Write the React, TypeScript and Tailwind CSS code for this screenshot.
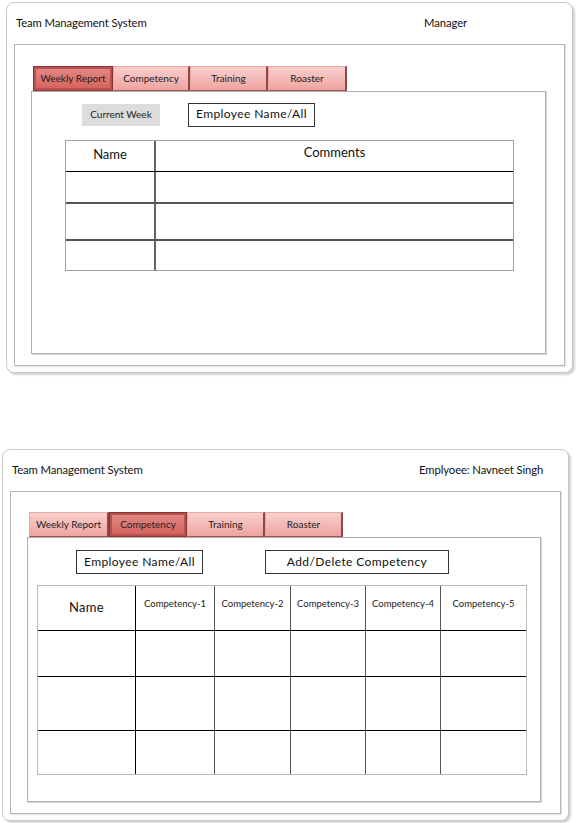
import React from 'react';

const tabs = ['Weekly Report', 'Competency', 'Training', 'Roaster'];

function Tab({ label, active, width }: { label: string; active: boolean; width: number }) {
  return (
    <div
      style={{ width }}
      className={
        active
          ? 'flex h-[25px] items-center justify-center border border-[#8a3634] bg-gradient-to-b from-[#e38a86] to-[#d4605c] shadow-[inset_0_0_0_2px_#b8504d] text-[10px] text-[#222]'
          : 'flex h-[25px] items-center justify-center border border-t-[#e7a9a6] border-l-[#e7a9a6] border-r-[2px] border-r-[#8f4644] border-b-[#9d5250] bg-gradient-to-b from-[#f9cfcd] to-[#eda3a0] text-[10px] text-[#222]'
      }
    >
      {label}
    </div>
  );
}

function Tabs({ active, widths }: { active: number; widths: number[] }) {
  return (
    <div className="flex">
      {tabs.map((t, i) => (
        <Tab key={t} label={t} active={i === active} width={widths[i]} />
      ))}
    </div>
  );
}

function Shell({ title, role, children, roleClass }: { title: string; role: string; children: React.ReactNode; roleClass: string }) {
  return (
    <div className="flex h-full flex-col rounded-[8px] border border-[#c9c9c9] bg-white shadow-[2px_2px_2px_rgba(0,0,0,0.18)]">
      <div className="relative h-[41px] text-[11.3px] tracking-[-0.1px] text-[#111]">
        <span className="absolute left-[9px] top-[12px]">{title}</span>
        <span className={`absolute top-[12px] ${roleClass}`}>{role}</span>
      </div>
      <div className="mx-[7px] mb-[6px] flex flex-1 flex-col border border-[#b5b5b5] shadow-[1px_1px_1px_rgba(0,0,0,0.1)]">
        {children}
      </div>
    </div>
  );
}

function WeeklyPanel() {
  return (
    <div className="ml-[6px] mt-[2px] h-[371px] w-[567px]">
      <Shell title="Team Management System" role="Manager" roleClass="left-[417px]">
        <div className="ml-[18px] mt-[21px]">
          <Tabs active={0} widths={[80, 77, 78, 79]} />
        </div>
        <div className="mb-[11px] ml-[16px] mr-[18px] flex-1 border border-[#b0b0b0] shadow-[1px_1px_1px_rgba(0,0,0,0.15)]">
          <div className="ml-[50px] mt-[11px] flex items-center gap-[28px]">
            <div className="flex h-[22px] w-[78px] items-center justify-center bg-[#dcdcdc] pb-[2px] text-[10px] text-[#222]">
              Current Week
            </div>
            <div className="flex h-[24px] w-[127px] items-center justify-center border border-[#333] pb-[2px] text-[12px] tracking-[0.4px] text-[#111]">
              Employee Name/All
            </div>
          </div>
          <div className="ml-[33px] mt-[13px] w-[449px] border border-[#a0a0a0]">
            <div className="flex h-[31px] border-b border-black">
              <div className="flex w-[90px] items-center justify-center border-r-2 border-[#666] pb-[3px] text-[13px] text-[#111]">
                Name
              </div>
              <div className="flex flex-1 items-start justify-center pt-[2px] text-[13px] text-[#111]">Comments</div>
            </div>
            {[32, 37, 29].map((h, i) => (
              <div
                key={i}
                style={{ height: h }}
                className={i < 2 ? 'flex border-b-2 border-[#555]' : 'flex'}
              >
                <div className="w-[90px] border-r-2 border-[#666]" />
                <div className="flex-1" />
              </div>
            ))}
          </div>
        </div>
      </Shell>
    </div>
  );
}

const comps = ['Competency-1', 'Competency-2', 'Competency-3', 'Competency-4', 'Competency-5'];
const compW = [79, 76, 75, 75];

function CompetencyPanel() {
  return (
    <div className="ml-[2px] mt-[76px] h-[372px] w-[567px]">
      <Shell title="Team Management System" role="Emplyoee: Navneet Singh" roleClass="left-[416px]">
        <div className="ml-[18px] mt-[20px]">
          <Tabs active={1} widths={[80, 78, 78, 78]} />
        </div>
        <div className="mb-[11px] ml-[16px] mr-[19px] flex-1 border border-[#b0b0b0] shadow-[1px_1px_1px_rgba(0,0,0,0.15)]">
          <div className="ml-[48px] mt-[12px] flex items-center gap-[62px]">
            <div className="flex h-[24px] w-[127px] items-center justify-center border border-[#333] pb-[1px] text-[12px] tracking-[0.4px] text-[#111]">
              Employee Name/All
            </div>
            <div className="flex h-[24px] w-[184px] items-center justify-center border border-[#333] pb-[1px] text-[12px] tracking-[0.4px] text-[#111]">
              Add/Delete Competency
            </div>
          </div>
          <div className="ml-[9px] mt-[11px] w-[490px] border border-[#b8b8b8]">
            <div className="flex h-[45px] border-b border-black">
              <div className="flex w-[98px] items-center justify-center border-r border-black text-[13px] tracking-[0.3px] text-[#111]">
                Name
              </div>
              {comps.map((c, i) => (
                <div
                  key={c}
                  style={i < 4 ? { width: compW[i] } : undefined}
                  className={
                    i < 4
                      ? 'flex items-start justify-center border-r border-[#555] pt-[11px] text-[9.5px] text-[#222]'
                      : 'flex flex-1 items-start justify-center pt-[11px] text-[9.5px] text-[#222]'
                  }
                >
                  {c}
                </div>
              ))}
            </div>
            {[46, 54, 43].map((h, r) => (
              <div key={r} style={{ height: h }} className={r < 2 ? 'flex border-b border-black' : 'flex'}>
                <div className="w-[98px] border-r border-black" />
                {compW.map((w, i) => (
                  <div key={i} style={{ width: w }} className="border-r border-[#555]" />
                ))}
                <div className="flex-1" />
              </div>
            ))}
          </div>
        </div>
      </Shell>
    </div>
  );
}

export default function App() {
  return (
    <div className="h-[823px] w-[576px] bg-white font-['Lato','Open_Sans',sans-serif]">
      <WeeklyPanel />
      <CompetencyPanel />
    </div>
  );
}
